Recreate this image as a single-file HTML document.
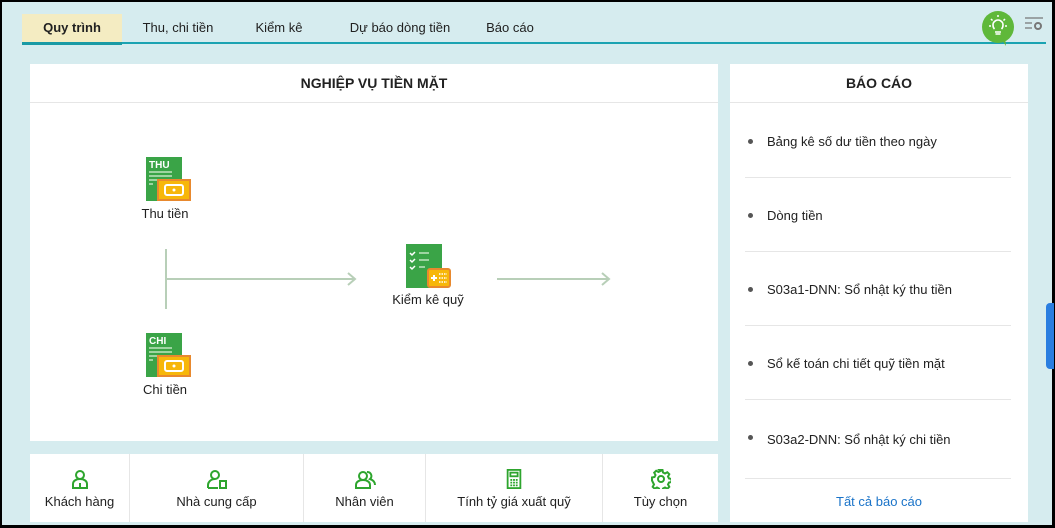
<!DOCTYPE html>
<html><head><meta charset="utf-8"><style>
*{box-sizing:border-box;margin:0;padding:0}
body{width:1055px;height:528px;overflow:hidden;background:#000;font-family:"Liberation Sans",sans-serif;font-size:13px;color:#212121;position:relative}
#app{position:absolute;left:2px;top:2px;width:1050px;height:523px;background:#d6ecef}
.tabs{position:absolute;left:20px;top:12px;width:1024px;height:30px;border-bottom:2px solid #1ba3b2}
.tab{position:absolute;top:0;height:30px;line-height:28px;font-size:13px;text-align:center}
.tab.act{background:#f4ecc2;font-weight:bold;border-bottom:3px solid #1a9aa5;height:31px}
.panel{position:absolute;background:#fff}
.hdr{height:39px;line-height:39px;text-align:center;font-weight:bold;font-size:14px;border-bottom:1px solid #e6e6e6}
.lbl{position:absolute;font-size:13px;text-align:center;width:100px}
.ln{position:absolute;background:#b8cfb8}
.item{position:absolute;left:15px;width:266px;height:74px;border-bottom:1px solid #e6e6e6;padding-left:22px;line-height:76px;font-size:13px}
.item:before{content:"";position:absolute;left:3px;top:35px;width:5px;height:5px;border-radius:50%;background:#555}
.bt{position:absolute;top:0;height:68px;border-right:1px solid #e6e6e6;text-align:center;font-size:13px}
.bt svg{display:block;margin:15px auto 5px}
</style></head><body><div id="app">
<div class="tabs">
<div class="tab act" style="left:0;width:100px">Quy trình</div>
<div class="tab" style="left:110px;width:92px">Thu, chi tiền</div>
<div class="tab" style="left:222px;width:70px">Kiểm kê</div>
<div class="tab" style="left:312px;width:132px">Dự báo dòng tiền</div>
<div class="tab" style="left:458px;width:60px">Báo cáo</div>
</div>
<svg style="position:absolute;left:979px;top:8px" width="34" height="38" viewBox="0 0 34 38"><circle cx="17" cy="17" r="16" fill="#5fb83a"/><path d="M21 30l4 6 -1-9z" fill="#5fb83a"/><path d="M14 22h6M14.5 24h5M13.5 19c-2-2-2-6 0-7.5 2-2 5-2 7 0 2 1.5 2 5.5 0 7.5" stroke="#fff" stroke-width="1.6" fill="none"/><path d="M17 5v2M10 9l1.5 1.5M24 9l-1.5 1.5M8 16h2M26 16h-2" stroke="#fff" stroke-width="1.5"/></svg>
<svg style="position:absolute;left:1022px;top:14px" width="20" height="16" viewBox="0 0 20 16"><path d="M1 2h18M1 7h7M1 12h7" stroke="#777" stroke-width="1.2"/><circle cx="14" cy="10" r="3" fill="none" stroke="#777" stroke-width="2"/></svg>

<div class="panel" style="left:28px;top:62px;width:688px;height:377px">
<div class="hdr">NGHIỆP VỤ TIỀN MẶT</div>
<svg style="position:absolute;left:116px;top:93px" width="46" height="46"><rect x="0" y="0" width="36" height="44" fill="#3aa447"/><text x="3" y="11" font-size="10" font-weight="bold" fill="#fff" font-family="Liberation Sans">THU</text><path d="M3 15h23M3 19h23M3 23h8M3 27h4" stroke="#bfe3bf" stroke-width="1.5"/><rect x="12" y="23" width="32" height="20" fill="#f7b70a" stroke="#e8892e" stroke-width="2"/><rect x="19" y="28" width="18" height="10" rx="2" fill="none" stroke="#fff" stroke-width="2"/><circle cx="28" cy="33" r="1.5" fill="#fff"/></svg>
<div class="lbl" style="left:85px;top:142px">Thu tiền</div>
<svg style="position:absolute;left:116px;top:269px" width="46" height="46"><rect x="0" y="0" width="36" height="44" fill="#3aa447"/><text x="3" y="11" font-size="10" font-weight="bold" fill="#fff" font-family="Liberation Sans">CHI</text><path d="M3 15h23M3 19h23M3 23h8M3 27h4" stroke="#bfe3bf" stroke-width="1.5"/><rect x="12" y="23" width="32" height="20" fill="#f7b70a" stroke="#e8892e" stroke-width="2"/><rect x="19" y="28" width="18" height="10" rx="2" fill="none" stroke="#fff" stroke-width="2"/><circle cx="28" cy="33" r="1.5" fill="#fff"/></svg>
<div class="lbl" style="left:85px;top:318px">Chi tiền</div>
<div class="ln" style="left:135px;top:185px;width:2px;height:60px"></div>
<div class="ln" style="left:135px;top:214px;width:190px;height:2px"></div>
<svg style="position:absolute;left:316px;top:208px" width="12" height="14"><path d="M2 1l7 6-7 6" stroke="#b8cfb8" stroke-width="2" fill="none"/></svg>
<div class="ln" style="left:467px;top:214px;width:112px;height:2px"></div>
<svg style="position:absolute;left:570px;top:208px" width="12" height="14"><path d="M2 1l7 6-7 6" stroke="#b8cfb8" stroke-width="2" fill="none"/></svg>
<svg style="position:absolute;left:376px;top:180px" width="46" height="46"><rect x="0" y="0" width="36" height="44" fill="#3aa447"/><path d="M4 9l2 2 3-3M4 16l2 2 3-3M4 23l2 2 3-3" stroke="#fff" stroke-width="1.5" fill="none"/><path d="M13 9h10M13 16h10M13 23h6" stroke="#bfe3bf" stroke-width="1.5"/><rect x="22" y="25" width="22" height="18" rx="2" fill="#f7b70a" stroke="#e8892e" stroke-width="2"/><path d="M25 34h6M28 31v6" stroke="#fff" stroke-width="2"/><path d="M33 30h8M33 34h8M33 38h8" stroke="#fff" stroke-width="1.5" stroke-dasharray="1.5 1"/></svg>
<div class="lbl" style="left:348px;top:228px">Kiểm kê quỹ</div>
</div>

<div class="panel" style="left:28px;top:452px;width:688px;height:68px">
<div class="bt" style="left:0;width:100px"><svg width="20" height="20" viewBox="0 0 20 20" fill="none" stroke="#2ea52e" stroke-width="2"><circle cx="10" cy="6" r="4"/><path d="M3 19v-4c0-3 3-5 7-5s7 2 7 5v4zM10 14v5"/></svg>Khách hàng</div>
<div class="bt" style="left:100px;width:174px"><svg width="20" height="20" viewBox="0 0 20 20" fill="none" stroke="#2ea52e" stroke-width="2"><circle cx="8" cy="6" r="4"/><path d="M1 19v-3c0-3 3-6 7-6M1 19h10"/><rect x="13" y="12" width="6" height="7"/></svg>Nhà cung cấp</div>
<div class="bt" style="left:274px;width:122px"><svg width="22" height="20" viewBox="0 0 22 20" fill="none" stroke="#2ea52e" stroke-width="2"><circle cx="9" cy="7" r="4"/><path d="M2 19v-3c0-3 3-5 7-5s7 2 7 5v3zM13 3a4 4 0 0 1 3 7c3 1 5 3 5 6"/></svg>Nhân viên</div>
<div class="bt" style="left:396px;width:177px"><svg width="18" height="20" viewBox="0 0 18 22" fill="none" stroke="#2ea52e" stroke-width="2"><rect x="2" y="1" width="14" height="20"/><rect x="5" y="4" width="8" height="4"/><path d="M5 12h2M8 12h2M11 12h2M5 15h2M8 15h2M11 15h2M5 18h2M8 18h2M11 18h2"/></svg>Tính tỷ giá xuất quỹ</div>
<div class="bt" style="left:573px;width:115px;border:none"><svg width="20" height="20" viewBox="0 0 20 20" fill="none" stroke="#2ea52e" stroke-width="2"><circle cx="10" cy="10" r="3"/><path d="M8.5 1h3l.5 2.5 2 1 2.3-1.3 2 2-1.3 2.3 1 2 2.5.5v3l-2.5.5-1 2 1.3 2.3-2 2-2.3-1.3-2 1-.5 2.5h-3l-.5-2.5-2-1-2.3 1.3-2-2 1.3-2.3-1-2L1 11.5v-3l2.5-.5 1-2-1.3-2.3 2-2 2.3 1.3 2-1z"/></svg>Tùy chọn</div>
</div>

<div class="panel" style="left:728px;top:62px;width:298px;height:458px">
<div class="hdr">BÁO CÁO</div>
<div class="item" style="top:40px">Bảng kê số dư tiền theo ngày</div>
<div class="item" style="top:114px">Dòng tiền</div>
<div class="item" style="top:188px">S03a1-DNN: Sổ nhật ký thu tiền</div>
<div class="item" style="top:262px">Sổ kế toán chi tiết quỹ tiền mặt</div>
<div class="item" style="top:336px;height:79px;line-height:79px">S03a2-DNN: Sổ nhật ký chi tiền</div>
<div style="position:absolute;top:416px;width:298px;height:42px;line-height:44px;text-align:center;color:#1a73c8">Tất cả báo cáo</div>
</div>
<div style="position:absolute;left:1044px;top:301px;width:8px;height:66px;background:#2a7ee0;border-radius:4px 0 0 4px"></div>
</div></body></html>
